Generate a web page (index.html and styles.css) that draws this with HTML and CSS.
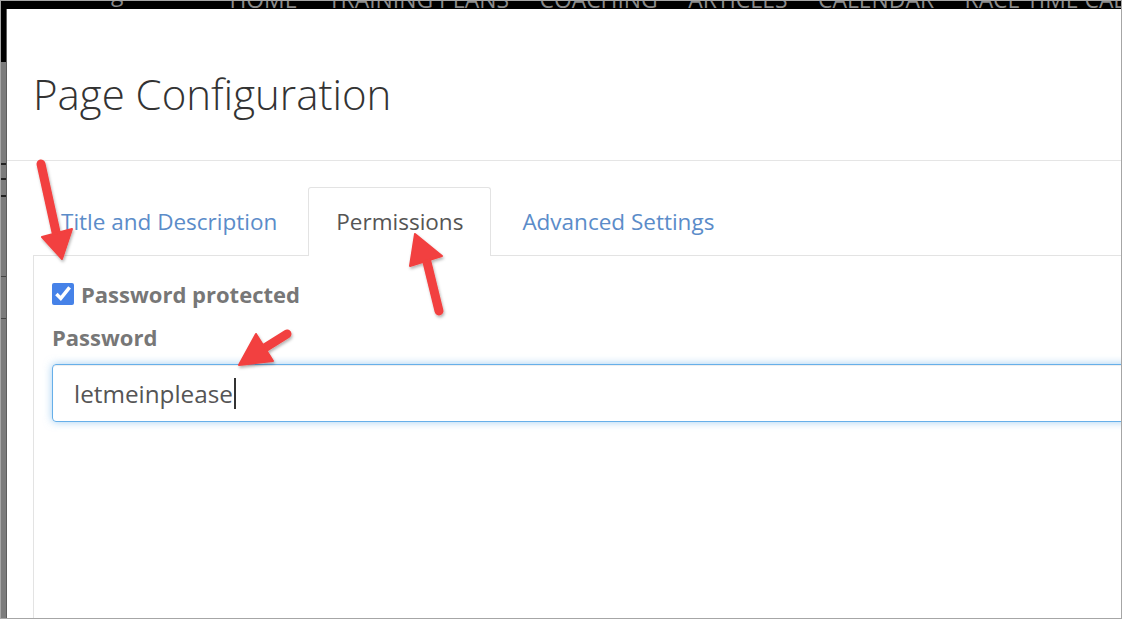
FILE: index.html
```html
<!DOCTYPE html>
<html lang="en">
    <head>
        <meta charset="UTF-8">
        <meta name="viewport" content="width=device-width, initial-scale=1.0">
        <title>Page Configuration</title>
        <link rel="stylesheet" href="styles.css">
    </head>
    <body>
        <div class="clFrame">
            <!-- site nav behind the modal, mostly hidden -->
            <div class="clTopNav">
                <span class="clLogo">g</span>
                <span class="clNavItem clHome">HOME</span>
                <span class="clNavItem">TRAINING PLANS</span>
                <span class="clNavItem">COACHING</span>
                <span class="clNavItem">ARTICLES</span>
                <span class="clNavItem">CALENDAR</span>
                <span class="clNavItem">RACE TIME CALCULATOR</span>
            </div>
            <div class="clMain">
                <div class="clStrip"></div>
                <div class="clModal">
                    <div class="clModalHeader">
                        <h2>Page Configuration</h2>
                    </div>
                    <div class="clModalBody">
                        <ul class="clTabs">
                            <li class="clTab">Title and Description</li>
                            <li class="clTab clActive">Permissions</li>
                            <li class="clTab">Advanced Settings</li>
                        </ul>
                        <div class="clTabContent">
                            <div class="clCheckRow">
                                <input type="checkbox" id="idProtected" checked>
                                <label for="idProtected">Password protected</label>
                            </div>
                            <p class="clLabel">Password</p>
                            <div class="clInput">letmeinplease<span class="clCaret"></span></div>
                        </div>
                    </div>
                </div>
            </div>
            <!-- annotation arrows -->
            <svg class="clArrows" width="1122" height="619" viewBox="0 0 1122 619">
                <defs>
                    <filter id="idShadow" x="-20%" y="-20%" width="140%" height="140%">
                        <feDropShadow dx="1" dy="2" stdDeviation="1.5" flood-color="#000" flood-opacity="0.3"/>
                    </filter>
                </defs>
                <g fill="#f2403f" stroke="#f2403f" stroke-linecap="round" stroke-linejoin="round" filter="url(#idShadow)">
                    <line x1="41" y1="164" x2="56" y2="232" stroke-width="9"/>
                    <polygon points="42,237 72,229 62,259" stroke-width="2"/>
                    <line x1="439" y1="311" x2="426" y2="258" stroke-width="9"/>
                    <polygon points="410,266 442,256 415,234" stroke-width="2"/>
                    <line x1="287" y1="334" x2="263" y2="349" stroke-width="9"/>
                    <polygon points="256,334 273,361 239,365" stroke-width="2"/>
                </g>
            </svg>
        </div>
    </body>
</html>
```

FILE: styles.css
```css
*{
    margin: 0px;
    padding: 0px;
    box-sizing: border-box;
}
body{
    font-family: "Open Sans", "Liberation Sans", sans-serif;
    background: #ffffff;
}
.clFrame{
    position: relative;
    width: 1122px;
    height: 619px;
    border: 1px solid #a6a6a6;
    overflow: hidden;
    display: flex;
    flex-direction: column;
}
.clTopNav{
    height: 8px;
    flex-shrink: 0;
    background: #000000;
    display: flex;
    align-items: flex-end;
    overflow: hidden;
    color: #8a8a8a;
    font-size: 22.9px;
    line-height: 1;
}
.clLogo{
    align-self: flex-start;
    margin-top: -19px;
    margin-left: 110px;
}
.clNavItem{
    margin-bottom: -3px;
    margin-right: 30.5px;
    white-space: nowrap;
}
.clHome{
    margin-left: 106px;
}
.clMain{
    flex: 1;
    display: flex;
    min-height: 0;
}
.clStrip{
    width: 6px;
    flex-shrink: 0;
    background: linear-gradient(to bottom,
        #000 0px, #000 53px, #7c7c7c 53px,
        #7c7c7c 154px, #222 154px, #222 156px, #7c7c7c 156px,
        #7c7c7c 169px, #222 169px, #222 171px, #7c7c7c 171px,
        #7c7c7c 186px, #222 186px, #222 188px, #7c7c7c 188px,
        #7c7c7c 267px, #444 267px, #444 268px, #7c7c7c 268px,
        #7c7c7c 309px, #444 309px, #444 310px, #7c7c7c 310px);
    border-right: 1px solid #5e5e5e;
}
.clModal{
    flex: 1;
    background: #ffffff;
    overflow: hidden;
    display: flex;
    flex-direction: column;
}
.clModalHeader{
    height: 152px;
    flex-shrink: 0;
    padding: 62px 0px 0px 26px;
    border-bottom: 1px solid #e5e5e5;
}
.clModalHeader h2{
    font-size: 42px;
    font-weight: 300;
    line-height: 46px;
    color: #333333;
}
.clModalBody{
    flex: 1;
    display: flex;
    flex-direction: column;
    padding: 26px 0px 0px 26px;
    margin-right: -40px;
}
.clTabs{
    list-style: none;
    display: flex;
    border-bottom: 1px solid #e3e3e3;
}
.clTab{
    padding: 18px 27px;
    margin-right: 3px;
    font-size: 22.5px;
    line-height: 31px;
    color: #5b8cc9;
    border: 1px solid transparent;
    border-bottom: none;
    border-radius: 3px 3px 0px 0px;
}
.clActive{
    color: #555555;
    background: #ffffff;
    border-color: #e3e3e3;
    margin-bottom: -1px;
    padding-bottom: 19px;
}
.clTabContent{
    flex: 1;
    border-left: 1px solid #e3e3e3;
    padding: 23px 0px 0px 18px;
}
.clCheckRow{
    display: flex;
    align-items: center;
    gap: 7px;
}
.clCheckRow input{
    width: 22px;
    height: 22px;
    accent-color: #4682e8;
}
.clCheckRow label,
.clLabel{
    font-size: 22px;
    font-weight: 700;
    line-height: 30px;
    color: #777777;
}
.clLabel{
    margin-top: 13px;
}
.clInput{
    margin-top: 12px;
    height: 58px;
    border: 1px solid #66afe9;
    border-radius: 4px;
    box-shadow: inset 0 1px 1px rgba(0, 0, 0, 0.075), 0 0 8px rgba(102, 175, 233, 0.6);
    padding-left: 21px;
    display: flex;
    align-items: center;
    font-size: 24.3px;
    color: #555555;
}
.clCaret{
    display: inline-block;
    width: 2px;
    height: 31px;
    margin-left: 1px;
    background: #333333;
}
.clArrows{
    position: absolute;
    left: -1px;
    top: -1px;
}
```
